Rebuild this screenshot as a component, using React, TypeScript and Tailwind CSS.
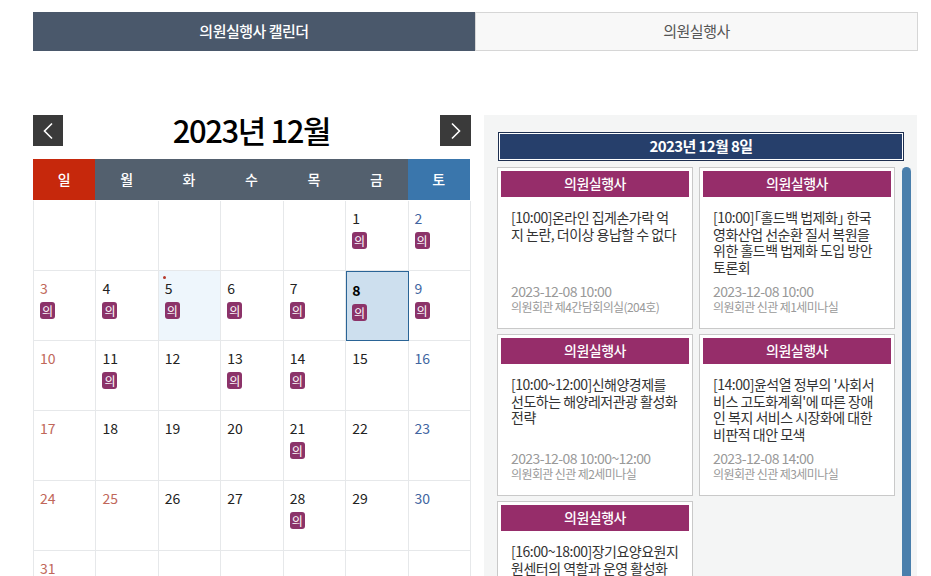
import React from 'react';

const font = "font-['Noto_Sans_CJK_KR','Noto_Sans',sans-serif]";
const heads = ['일', '월', '화', '수', '목', '금', '토'];
const headBg = ['bg-[#c6280c]', 'bg-[#53606e]', 'bg-[#53606e]', 'bg-[#53606e]', 'bg-[#53606e]', 'bg-[#53606e]', 'bg-[#3a76ac]'];
const withEvents = [1, 2, 3, 4, 5, 6, 7, 8, 9, 11, 13, 14, 21, 28];
const blanks = [0, 0, 0, 0, 0];
const trailing = [0, 0, 0, 0, 0, 0];

const events = [
  { title: '[10:00]온라인 집게손가락 억지 논란, 더이상 용납할 수 없다', date: '2023-12-08 10:00', place: '의원회관 제4간담회의실(204호)' },
  { title: '[10:00]「홀드백 법제화」 한국 영화산업 선순환 질서 복원을 위한 홀드백 법제화 도입 방안 토론회', date: '2023-12-08 10:00', place: '의원회관 신관 제1세미나실' },
  { title: '[10:00~12:00]신해양경제를 선도하는 해양레저관광 활성화 전략', date: '2023-12-08 10:00~12:00', place: '의원회관 신관 제2세미나실' },
  { title: "[14:00]윤석열 정부의 '사회서비스 고도화계획'에 따른 장애인 복지 서비스 시장화에 대한 비판적 대안 모색", date: '2023-12-08 14:00', place: '의원회관 신관 제3세미나실' },
  { title: '[16:00~18:00]장기요양요원지원센터의 역할과 운영 활성화 방안', date: '2023-12-08 16:00~18:00', place: '의원회관 신관 제1세미나실' },
];

function Badge() {
  return (
    <span className="mt-[3px] flex h-[17px] w-[15px] items-center justify-center rounded-[3px] bg-[#8c3369] text-[12px] leading-none text-white">
      의
    </span>
  );
}

function dayColor(i: number, d: number) {
  if (i % 7 === 0 || d === 25) return 'text-[#c0675a]';
  if (i % 7 === 6) return 'text-[#41659f]';
  return 'text-[#222]';
}

function Day({ d, i }: { d: number; i: number }) {
  const selected = d === 8;
  const today = d === 5;
  return (
    <div
      className={`relative h-[70px] border-r border-b border-[#e6e8ea] pl-[6px] pt-[7px] ${today ? 'bg-[#eef6fc]' : ''} ${selected ? 'bg-[#cddfee] outline outline-1 -outline-offset-1 outline-[#2a6496]' : ''}`}
    >
      {today && <span className="absolute left-[4px] top-[5px] h-[3px] w-[3px] rounded-full bg-[#b5382a]" />}
      <div className={`text-[14px] leading-[21px] ${dayColor(i, d)} ${selected ? 'pt-[2px] font-bold text-black' : ''}`}>{d}</div>
      {withEvents.includes(d) && <Badge />}
    </div>
  );
}

function NavButton({ dir, width }: { dir: 'left' | 'right'; width: string }) {
  return (
    <button className={`flex h-[31px] items-center justify-center bg-[#3a3a3a] ${width}`}>
      <svg width="12" height="18" viewBox="0 0 12 18" fill="none" stroke="white" strokeWidth="1.6">
        <path d={dir === 'left' ? 'M10 1.5 2.5 9l7.5 7.5' : 'M2 1.5 9.5 9 2 16.5'} />
      </svg>
    </button>
  );
}

function EventCard({ e }: { e: (typeof events)[number] }) {
  return (
    <div className="flex h-[161.5px] flex-col border border-[#c9c9c9] bg-white p-[3px]">
      <div className="flex h-[26px] shrink-0 items-center justify-center bg-[#962d6a] pb-[2px] text-[14px] font-medium tracking-[-0.5px] text-white">
        의원실행사
      </div>
      <div className="flex flex-1 flex-col px-[10px] pb-[11px] pt-[12px]">
        <p className="text-[14px] leading-[16.7px] tracking-[-0.5px] text-[#333] [font-feature-settings:'halt']">{e.title}</p>
        <p className="mt-auto text-[14px] leading-[16px] tracking-[-0.6px] text-[#999]">{e.date}</p>
        <p className="text-[12px] leading-[15px] tracking-[-0.6px] text-[#999]">{e.place}</p>
      </div>
    </div>
  );
}

export default function App() {
  return (
    <div className={`h-screen overflow-hidden bg-white pl-[33px] pt-[12px] ${font}`}>
      <div className="flex h-[39px] w-[885px] text-[15px] tracking-[-0.5px]">
        <div className="flex w-[442px] items-center justify-center bg-[#4a586b] font-medium text-white">의원실행사 캘린더</div>
        <div className="flex w-[443px] items-center justify-center border border-[#d6d6d6] bg-[#f8f8f8] text-[#555]">의원실행사</div>
      </div>

      <div className="mt-[64px] flex w-[884px] gap-[13px]">
        <div className="w-[438px] shrink-0">
          <div className="flex h-[31px] items-center justify-between">
            <NavButton dir="left" width="w-[30px]" />
            <h1 className="-mt-[3px] text-[31px] font-medium leading-none tracking-[-1.4px] text-black">2023년 12월</h1>
            <NavButton dir="right" width="w-[31px]" />
          </div>
          <div className="mt-[13px] grid w-[437px] grid-cols-7">
            {heads.map((h, i) => (
              <div key={h} className={`flex h-[41px] items-center justify-center text-[14px] font-medium text-white ${headBg[i]}`}>
                {h}
              </div>
            ))}
          </div>
          <div className="grid grid-cols-7 border-l border-t border-t-white border-l-[#e6e8ea]">
            {blanks.map((_, i) => (
              <div key={i} className="h-[70px] border-r border-b border-[#e6e8ea]" />
            ))}
            {Array.from({ length: 31 }, (_, k) => k + 1).map((d, k) => (
              <Day key={d} d={d} i={k + 5} />
            ))}
            {trailing.map((_, i) => (
              <div key={i} className="h-[70px] border-r border-b border-[#e6e8ea]" />
            ))}
          </div>
        </div>

        <div className="relative h-[500px] w-[433px] shrink-0 bg-[#f4f5f5] pl-[13px] pt-[17px]">
          <div className="ml-[1px] flex h-[29px] w-[406px] items-center justify-center border border-[#1d2f50] bg-[#263f6b] text-[15px] font-bold tracking-[-0.6px] text-white outline outline-1 -outline-offset-2 outline-white">
            2023년 12월 8일
          </div>
          <div className="mt-[6px] grid w-[398px] grid-cols-2 gap-x-[6px] gap-y-[5.5px]">
            {events.map((e, i) => (
              <EventCard key={i} e={e} />
            ))}
          </div>
          <div className="absolute left-[418px] top-[52px] h-[460px] w-[9px] rounded-t-full bg-[#4a7fac]" />
        </div>
      </div>
    </div>
  );
}
